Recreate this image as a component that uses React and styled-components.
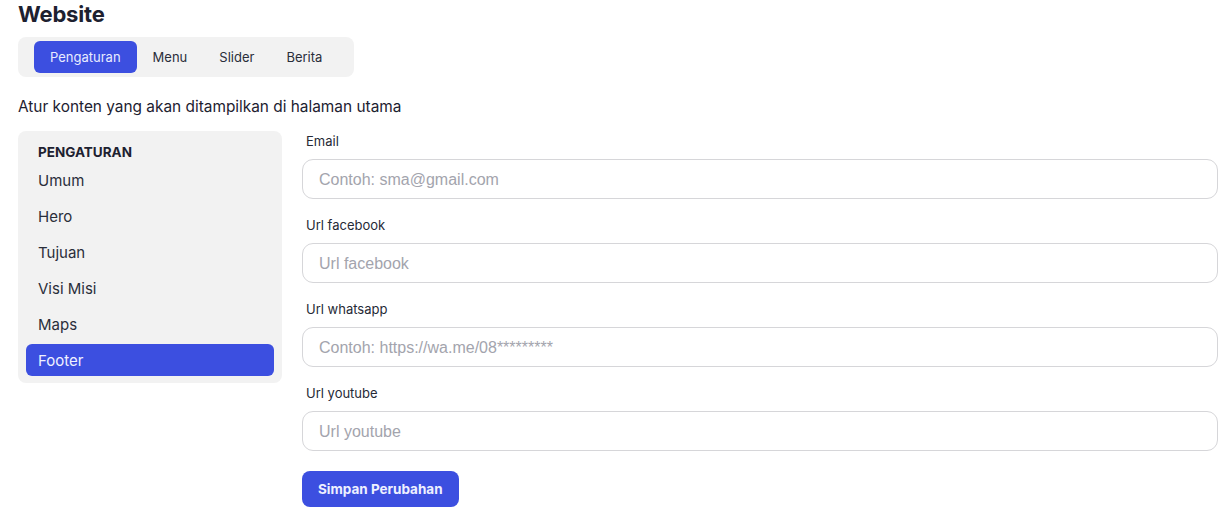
import React, {useState} from "react"
import styled, {createGlobalStyle} from "styled-components"

const GlobalStyle = createGlobalStyle`
  body {
    margin: 0;
    background: #fff;
    font-family: Inter, "Noto Sans", sans-serif;
    color: #1d2130;
  }
`

const Page = styled.div`
  padding: 0 7px 0 18px;
`

const Title = styled.h1`
  margin: 0;
  font-size: 22px;
  line-height: 28px;
  font-weight: 700;
  letter-spacing: -0.2px;
`

const TabBar = styled.div`
  display: inline-flex;
  margin-top: 9px;
  padding: 4px 16px;
  background: #f2f2f2;
  border-radius: 8px;
`

const Tab = styled.button`
  height: 32px;
  padding: 0 16px;
  border: none;
  border-radius: 6px;
  font-family: inherit;
  font-size: 13px;
  cursor: pointer;
  background: ${p => p.$active ? "#3c4fe0" : "transparent"};
  color: ${p => p.$active ? "#e8ebff" : "#2a2e3a"};
`

const Lead = styled.p`
  margin: 20px 0 14px;
  font-size: 15.4px;
  line-height: 20px;
`

const Layout = styled.div`
  display: flex;
  align-items: flex-start;
  gap: 20px;
`

const Sidebar = styled.nav`
  width: 264px;
  flex-shrink: 0;
  box-sizing: border-box;
  padding: 11px 8px 7px;
  background: #f2f2f2;
  border-radius: 8px;
  display: flex;
  flex-direction: column;
  gap: 4px;
`

const SideHeading = styled.div`
  margin-bottom: -2px;
  padding: 0 12px;
  font-size: 13.5px;
  line-height: 20px;
  font-weight: 700;
  color: #1d2130;
`

const SideItem = styled.div`
  height: 32px;
  display: flex;
  align-items: center;
  padding: 0 12px;
  border-radius: 6px;
  font-size: 15px;
  cursor: pointer;
  background: ${p => p.$active ? "#3c4fe0" : "transparent"};
  color: ${p => p.$active ? "#f0f2ff" : "#2a2e3a"};
`

const Form = styled.form`
  flex: 1;
  display: flex;
  flex-direction: column;
  gap: 16px;
`

const Field = styled.div`
  display: flex;
  flex-direction: column;
  gap: 8px;
`

const Label = styled.label`
  padding-left: 4px;
  font-size: 13px;
  line-height: 20px;
  color: #262a36;
`

const Input = styled.input`
  height: 40px;
  box-sizing: border-box;
  padding: 2px 16px 0;
  border: 1px solid #d6d6d9;
  border-radius: 11px;
  font-family: "Liberation Sans", Arial, sans-serif;
  font-size: 16px;
  color: #1d2130;
  outline: none;

  &::placeholder {
    color: #a3a4ad;
  }
`

const SaveButton = styled.button`
  align-self: flex-start;
  margin-top: 4px;
  height: 36px;
  padding: 0 16px;
  border: none;
  border-radius: 8px;
  background: #3c4fe0;
  color: #eef0ff;
  font-family: inherit;
  font-size: 13.5px;
  font-weight: 700;
  cursor: pointer;
`

const tabs = ["Pengaturan", "Menu", "Slider", "Berita"]
const menu = ["Umum", "Hero", "Tujuan", "Visi Misi", "Maps", "Footer"]
const fields = [
  {label: "Email", placeholder: "Contoh: sma@gmail.com"},
  {label: "Url facebook", placeholder: "Url facebook"},
  {label: "Url whatsapp", placeholder: "Contoh: https://wa.me/08*********"},
  {label: "Url youtube", placeholder: "Url youtube"},
]

const App = () => {
  const [tab, setTab] = useState("Pengaturan")
  const [section, setSection] = useState("Footer")

  return (
    <>
      <GlobalStyle />
      <Page>
        <Title>Website</Title>
        <TabBar>
          {tabs.map(t => (
            <Tab key={t} $active={t === tab} onClick={() => setTab(t)}>{t}</Tab>
          ))}
        </TabBar>
        <Lead>Atur konten yang akan ditampilkan di halaman utama</Lead>
        <Layout>
          <Sidebar>
            <SideHeading>PENGATURAN</SideHeading>
            {menu.map(m => (
              <SideItem key={m} $active={m === section} onClick={() => setSection(m)}>{m}</SideItem>
            ))}
          </Sidebar>
          <Form onSubmit={e => e.preventDefault()}>
            {fields.map(f => (
              <Field key={f.label}>
                <Label>{f.label}</Label>
                <Input placeholder={f.placeholder} />
              </Field>
            ))}
            <SaveButton type="submit">Simpan Perubahan</SaveButton>
          </Form>
        </Layout>
      </Page>
    </>
  )
}

export default App
